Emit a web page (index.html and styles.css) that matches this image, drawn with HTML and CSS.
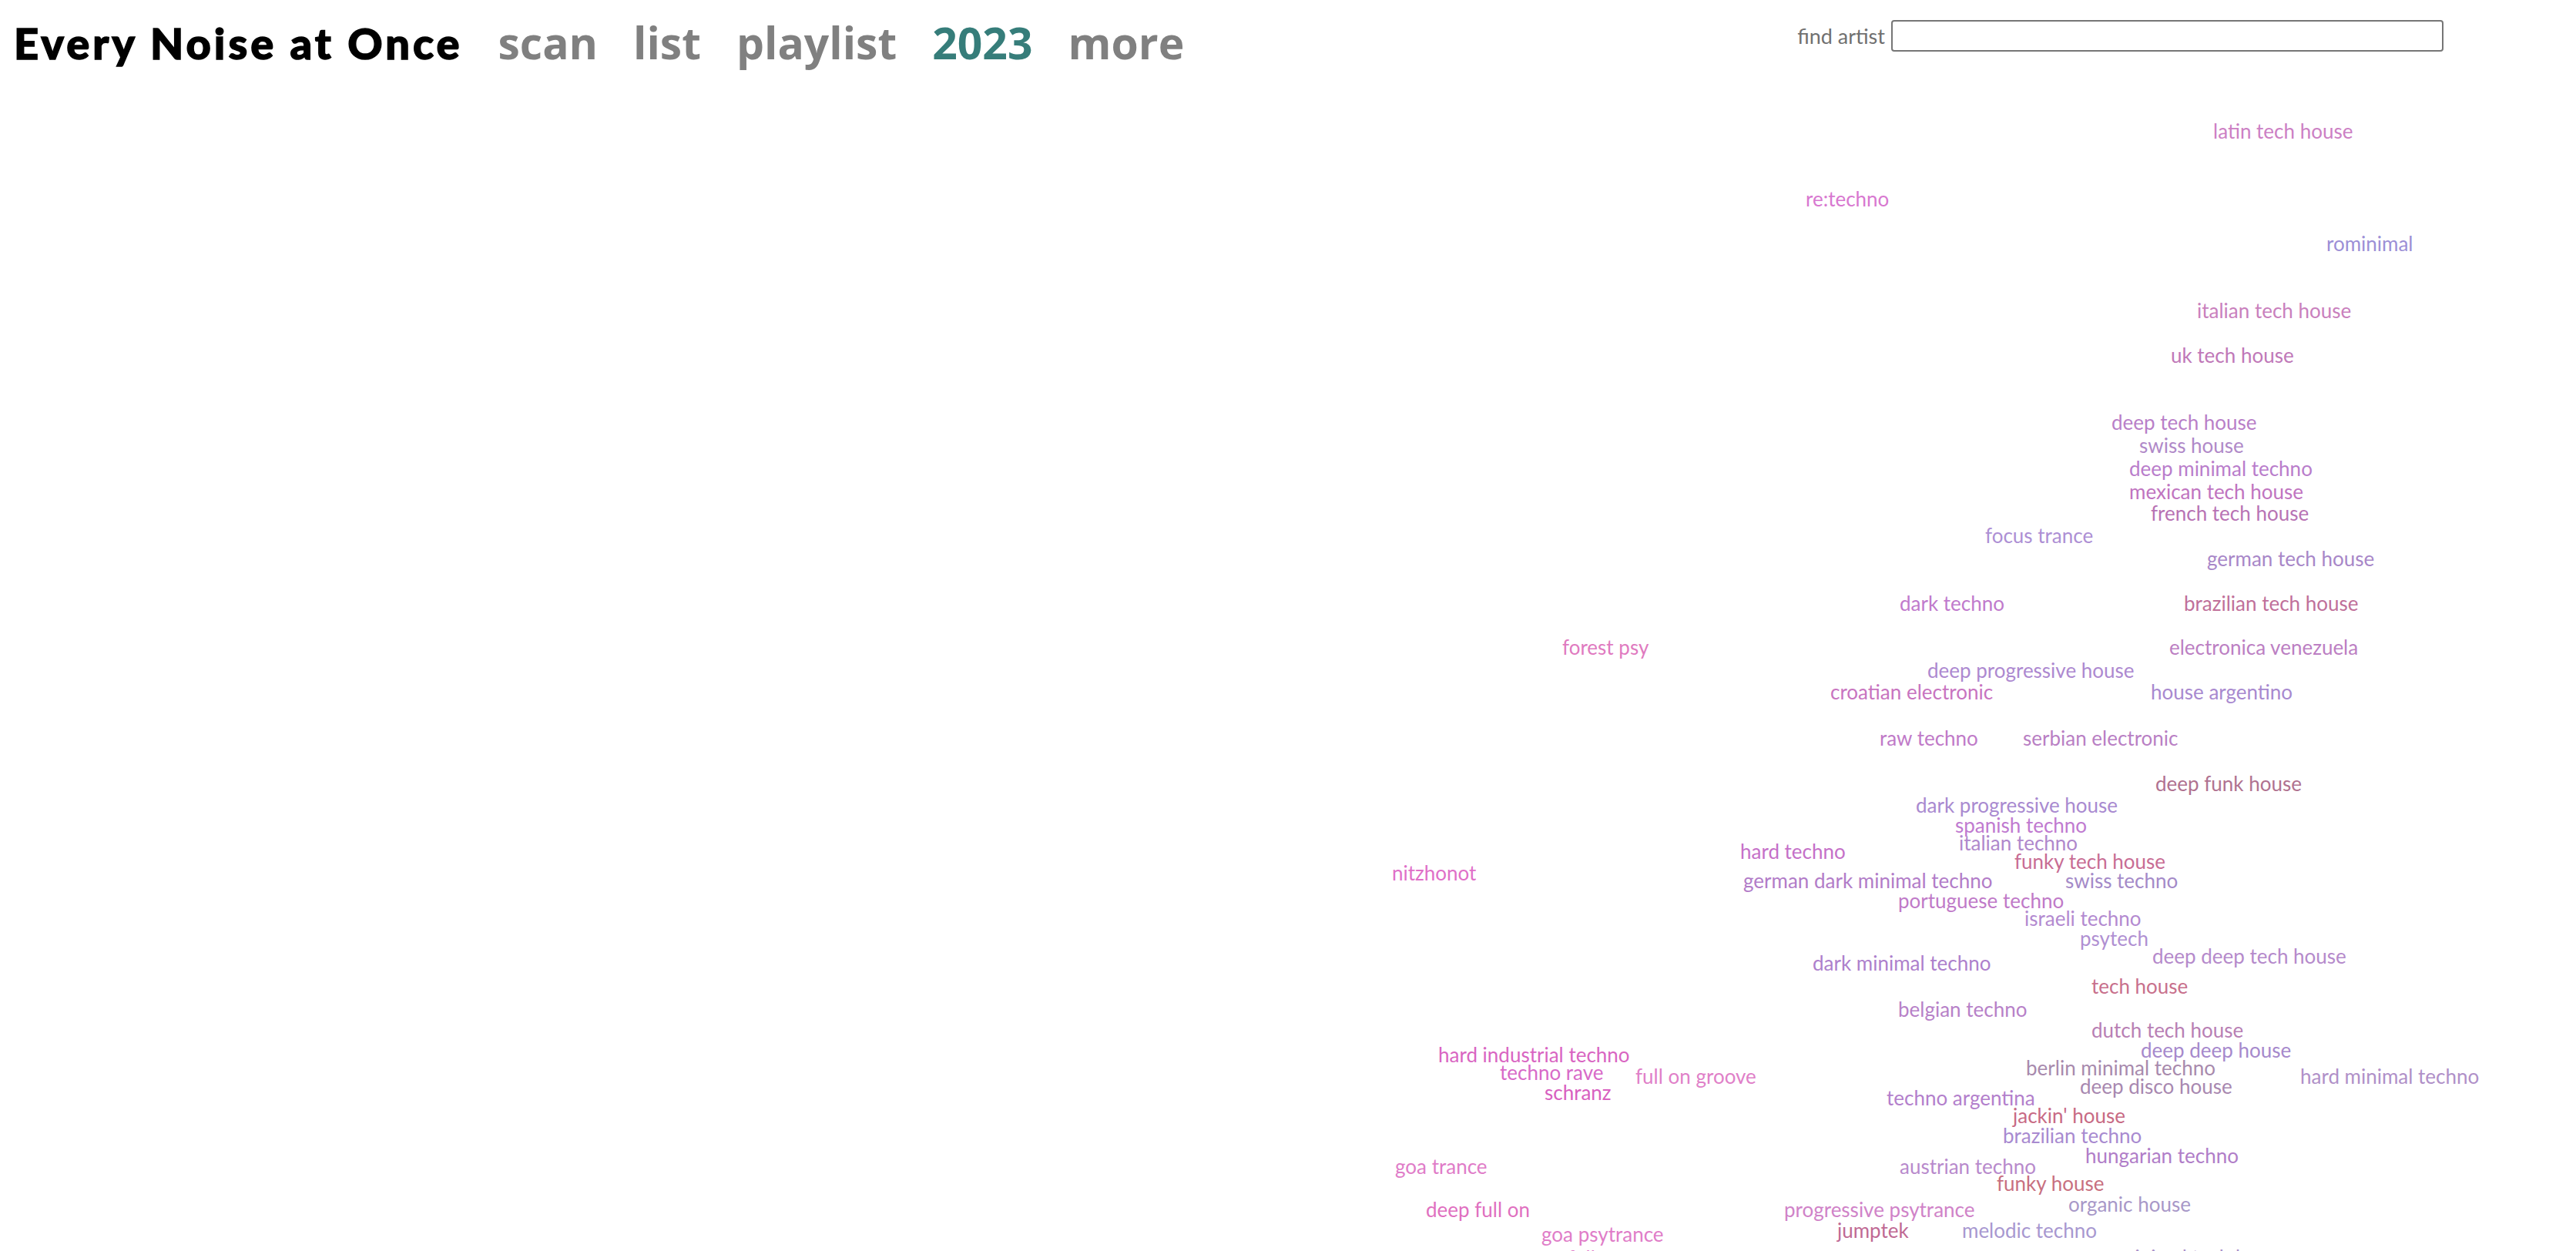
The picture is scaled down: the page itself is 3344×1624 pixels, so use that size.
FILE: index.html
```html
<!DOCTYPE html>
<html lang="en">
<head>
<meta charset="utf-8">
<title>Every Noise at Once</title>
<link rel="stylesheet" href="styles.css">
</head>
<body>
<header class="top">
  <div class="brand">
    <h1 class="title">Every Noise at Once</h1>
    <nav class="nav">
      <a class="nav-link" href="#">scan</a>
      <a class="nav-link" href="#">list</a>
      <a class="nav-link" href="#">playlist</a>
      <a class="nav-link nav-year" href="#">2023</a>
      <a class="nav-link" href="#">more</a>
    </nav>
  </div>
  <form class="search">
    <label class="search-label" for="artist">find artist</label>
    <input class="search-input" id="artist" type="text">
  </form>
</header>
<main class="canvas">
  <a class="genre" style="left:2873px;top:51px;color:#cc80c4">latin tech house</a>
  <a class="genre" style="left:2344px;top:139px;color:#d878d0">re:techno</a>
  <a class="genre" style="left:3020px;top:197px;color:#9c8fd6">rominimal</a>
  <a class="genre" style="left:2852px;top:284px;color:#c980bd">italian tech house</a>
  <a class="genre" style="left:2818px;top:342px;color:#c078b8">uk tech house</a>
  <a class="genre" style="left:2741px;top:429px;color:#b97fc8">deep tech house</a>
  <a class="genre" style="left:2777px;top:459px;color:#b089c8">swiss house</a>
  <a class="genre" style="left:2764px;top:489px;color:#b97dcb">deep minimal techno</a>
  <a class="genre" style="left:2764px;top:519px;color:#c074c0">mexican tech house</a>
  <a class="genre" style="left:2792px;top:547px;color:#b873b4">french tech house</a>
  <a class="genre" style="left:2577px;top:576px;color:#ad8fd4">focus trance</a>
  <a class="genre" style="left:2865px;top:606px;color:#a887c8">german tech house</a>
  <a class="genre" style="left:2466px;top:664px;color:#c07acc">dark techno</a>
  <a class="genre" style="left:2835px;top:664px;color:#c0709a">brazilian tech house</a>
  <a class="genre" style="left:2028px;top:721px;color:#e07ac0">forest psy</a>
  <a class="genre" style="left:2816px;top:721px;color:#bc7fc3">electronica venezuela</a>
  <a class="genre" style="left:2502px;top:751px;color:#ad89d0">deep progressive house</a>
  <a class="genre" style="left:2376px;top:779px;color:#c874c0">croatian electronic</a>
  <a class="genre" style="left:2792px;top:779px;color:#a889cf">house argentino</a>
  <a class="genre" style="left:2440px;top:839px;color:#c07ac8">raw techno</a>
  <a class="genre" style="left:2626px;top:839px;color:#b97fc4">serbian electronic</a>
  <a class="genre" style="left:2798px;top:898px;color:#b07290">deep funk house</a>
  <a class="genre" style="left:2487px;top:926px;color:#a98ad0">dark progressive house</a>
  <a class="genre" style="left:2538px;top:952px;color:#c07ad0">spanish techno</a>
  <a class="genre" style="left:2543px;top:975px;color:#b088cc">italian techno</a>
  <a class="genre" style="left:2259px;top:986px;color:#c570c8">hard techno</a>
  <a class="genre" style="left:2615px;top:999px;color:#c86d94">funky tech house</a>
  <a class="genre" style="left:1807px;top:1014px;color:#e070c8">nitzhonot</a>
  <a class="genre" style="left:2263px;top:1024px;color:#b27cc8">german dark minimal techno</a>
  <a class="genre" style="left:2681px;top:1024px;color:#a48ac8">swiss techno</a>
  <a class="genre" style="left:2464px;top:1050px;color:#c07ac8">portuguese techno</a>
  <a class="genre" style="left:2628px;top:1073px;color:#b38ad0">israeli techno</a>
  <a class="genre" style="left:2700px;top:1099px;color:#b090d2">psytech</a>
  <a class="genre" style="left:2794px;top:1122px;color:#b58acb">deep deep tech house</a>
  <a class="genre" style="left:2353px;top:1131px;color:#ad80cc">dark minimal techno</a>
  <a class="genre" style="left:2715px;top:1161px;color:#c8708c">tech house</a>
  <a class="genre" style="left:2464px;top:1191px;color:#b781c8">belgian techno</a>
  <a class="genre" style="left:2715px;top:1218px;color:#b87fb4">dutch tech house</a>
  <a class="genre" style="left:2779px;top:1244px;color:#a689cc">deep deep house</a>
  <a class="genre" style="left:1867px;top:1250px;color:#d965c2">hard industrial techno</a>
  <a class="genre" style="left:2630px;top:1267px;color:#a88aad">berlin minimal techno</a>
  <a class="genre" style="left:1947px;top:1273px;color:#d86ac8">techno rave</a>
  <a class="genre" style="left:2123px;top:1278px;color:#e080c8">full on groove</a>
  <a class="genre" style="left:2986px;top:1278px;color:#b090c8">hard minimal techno</a>
  <a class="genre" style="left:2700px;top:1291px;color:#a888b0">deep disco house</a>
  <a class="genre" style="left:2005px;top:1299px;color:#d860c0">schranz</a>
  <a class="genre" style="left:2449px;top:1306px;color:#b37fcc">techno argentina</a>
  <a class="genre" style="left:2613px;top:1329px;color:#c86a84">jackin' house</a>
  <a class="genre" style="left:2600px;top:1355px;color:#a88ad0">brazilian techno</a>
  <a class="genre" style="left:2707px;top:1381px;color:#b07dc8">hungarian techno</a>
  <a class="genre" style="left:1811px;top:1395px;color:#e07cc8">goa trance</a>
  <a class="genre" style="left:2466px;top:1395px;color:#b88acc">austrian techno</a>
  <a class="genre" style="left:2592px;top:1417px;color:#c87080">funky house</a>
  <a class="genre" style="left:2685px;top:1444px;color:#a898c8">organic house</a>
  <a class="genre" style="left:1851px;top:1451px;color:#e070c0">deep full on</a>
  <a class="genre" style="left:2316px;top:1451px;color:#d083c8">progressive psytrance</a>
  <a class="genre" style="left:2385px;top:1478px;color:#c06a94">jumptek</a>
  <a class="genre" style="left:2547px;top:1478px;color:#a898d0">melodic techno</a>
  <a class="genre" style="left:2001px;top:1483px;color:#e07dc8">goa psytrance</a>
  <a class="genre" style="left:2750px;top:1513px;color:#a890c8">minimal tech house</a>
  <a class="genre" style="left:2035px;top:1514px;color:#e07cc8">full on</a>
</main>
</body>
</html>
```

FILE: styles.css
```css
html, body {
  margin: 0;
  padding: 0;
  background: #ffffff;
}

body {
  width: 3344px;
  height: 1624px;
  overflow: hidden;
  font-family: Lato, "Noto Sans", sans-serif;
}

.top {
  display: flex;
  align-items: flex-start;
  height: 104px;
  padding: 0 172px 0 18px;
  box-sizing: border-box;
}

.brand {
  display: flex;
  align-items: baseline;
  padding-top: 27px;
}

.title {
  margin: 0;
  font-family: Lato, sans-serif;
  font-weight: 900;
  font-size: 56px;
  line-height: 1;
  color: #000000;
  letter-spacing: 4px;
  -webkit-text-stroke: 1.4px #000000;
}

.nav {
  display: flex;
  align-items: baseline;
  gap: 46px;
  margin-left: 46px;
}

.nav-link {
  font-family: "Open Sans", sans-serif;
  font-weight: 700;
  font-size: 57px;
  line-height: 1;
  color: #808080;
  text-decoration: none;
}

.nav-year {
  color: #367d7a;
}

.search {
  margin: 26px 0 0 auto;
  display: flex;
  align-items: center;
  gap: 8px;
}

.search-label {
  font-family: Lato, sans-serif;
  font-size: 27px;
  color: #707070;
}

.search-input {
  width: 717px;
  height: 41px;
  box-sizing: border-box;
  border: 2px solid #767676;
  border-radius: 4px;
  background: #ffffff;
  padding: 2px 6px;
  font-size: 26px;
  margin: 0;
}

.canvas {
  position: relative;
  height: 1520px;
}

.genre {
  position: absolute;
  white-space: nowrap;
  font-family: Lato, sans-serif;
  font-size: 26px;
  line-height: 1.2;
  text-decoration: none;
}
```
